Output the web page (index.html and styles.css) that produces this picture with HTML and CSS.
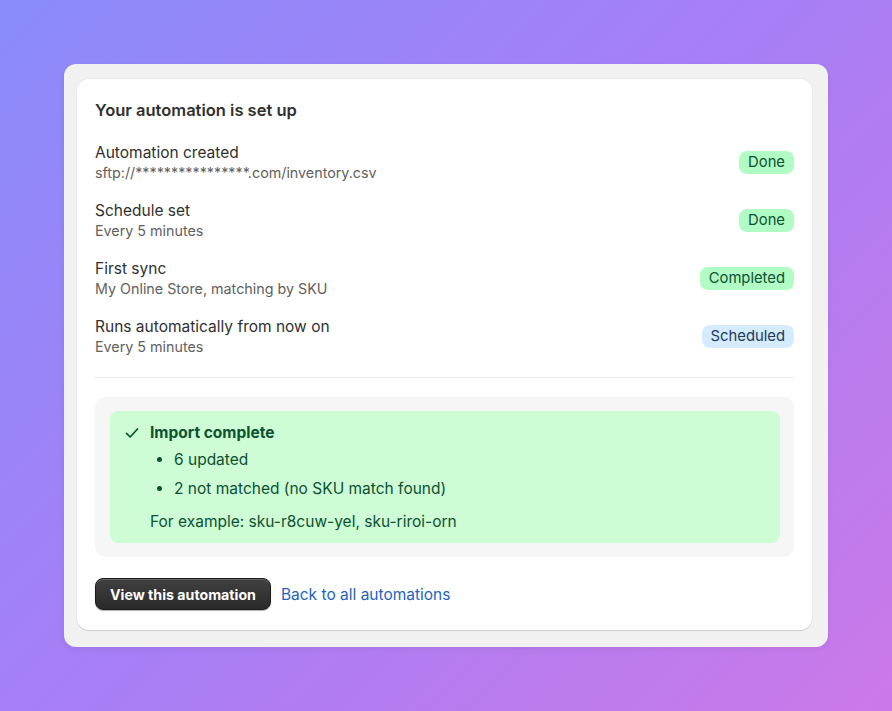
FILE: index.html
```html
<!DOCTYPE html>
<html lang="en">
<head>
    <title>Automation set up</title>
    <link rel="stylesheet" href="styles.css">
</head>
<body>
    <div class="frame">
        <div class="card">
            <h2 class="title">Your automation is set up</h2>

            <div class="steps">
                <div class="step">
                    <div class="step-text">
                        <div class="step-label">Automation created</div>
                        <div class="step-sub">sftp://****************.com/inventory.csv</div>
                    </div>
                    <span class="badge badge-success">Done</span>
                </div>
                <div class="step">
                    <div class="step-text">
                        <div class="step-label">Schedule set</div>
                        <div class="step-sub">Every 5 minutes</div>
                    </div>
                    <span class="badge badge-success">Done</span>
                </div>
                <div class="step">
                    <div class="step-text">
                        <div class="step-label">First sync</div>
                        <div class="step-sub">My Online Store, matching by SKU</div>
                    </div>
                    <span class="badge badge-success">Completed</span>
                </div>
                <div class="step">
                    <div class="step-text">
                        <div class="step-label">Runs automatically from now on</div>
                        <div class="step-sub">Every 5 minutes</div>
                    </div>
                    <span class="badge badge-info">Scheduled</span>
                </div>
            </div>

            <hr class="divider">

            <div class="result-box">
                <div class="notice">
                    <div class="notice-icon">
                        <svg width="14" height="14" viewBox="0 0 14 14" fill="none">
                            <path d="M1.5 7.4 L5.2 11 L12.5 3" stroke="#0c5132" stroke-width="1.7" stroke-linecap="round" stroke-linejoin="round"/>
                        </svg>
                    </div>
                    <div class="notice-body">
                        <div class="notice-title">Import complete</div>
                        <ul class="notice-list">
                            <li>6 updated</li>
                            <li>2 not matched (no SKU match found)</li>
                        </ul>
                        <p class="notice-example">For example: sku-r8cuw-yel, sku-riroi-orn</p>
                    </div>
                </div>
            </div>

            <div class="actions">
                <button type="button" class="button">View this automation</button>
                <a href="#" class="link">Back to all automations</a>
            </div>
        </div>
    </div>
</body>
</html>
```

FILE: styles.css
```css
html, body {
    height: 100%;
}

body {
    margin: 0;
    padding: 0;
    display: flex;
    align-items: center;
    justify-content: center;
    background: linear-gradient(135deg, #8a8bfb 0%, #a87ef5 50%, #cb79e8 100%);
    font-family: Inter, "Noto Sans", Arial, sans-serif;
    color: #303030;
}

.frame {
    width: 764px;
    box-sizing: border-box;
    padding: 15px 16px 17px 13px;
    background-color: #f1f1f1;
    border-radius: 12px;
    box-shadow: 0 2px 6px rgba(0, 0, 0, 0.06);
}

.card {
    padding: 21px 18px 20px 18px;
    background-color: #fff;
    border-radius: 12px;
    box-shadow: 0 1px 0 rgba(26, 26, 26, 0.12), 0 0 0 1px rgba(26, 26, 26, 0.03);
}

.title {
    margin: 0;
    font-size: 16.5px;
    line-height: 20px;
    font-weight: 620;
    color: #303030;
}

.steps {
    display: flex;
    flex-direction: column;
    gap: 17px;
    margin-top: 22px;
}

.step {
    display: flex;
    align-items: center;
    justify-content: space-between;
}

.step-label {
    font-size: 15.5px;
    line-height: 21px;
    color: #303030;
}

.step-sub {
    font-size: 14.3px;
    line-height: 20px;
    color: #616161;
}

.badge {
    display: inline-block;
    padding: 0 9px;
    height: 23px;
    line-height: 23px;
    border-radius: 8px;
    font-size: 14.8px;
}

.badge-success {
    background-color: #b1fcc5;
    color: #0c5132;
}

.badge-info {
    background-color: #d5ebff;
    color: #1d3a57;
}

.divider {
    margin: 20px 0 19px;
    border: none;
    border-top: 1px solid #ebebeb;
}

.result-box {
    padding: 14px 14px 14px 15px;
    background-color: #f6f6f6;
    border-radius: 10px;
}

.notice {
    display: flex;
    gap: 5px;
    padding: 12px 16px 11px 15px;
    background-color: #cdfcd5;
    border-radius: 8px;
    color: #0c5132;
    font-size: 15.5px;
    line-height: 20px;
}

.notice-icon {
    width: 20px;
    height: 20px;
    display: flex;
    align-items: center;
}

.notice-title {
    font-weight: 650;
}

.notice-list {
    margin: 7px 0 0;
    padding-left: 24px;
}

.notice-list li + li {
    margin-top: 9px;
}

.notice-example {
    margin: 13px 0 0;
}

.actions {
    display: flex;
    align-items: center;
    gap: 10px;
    margin-top: 21px;
}

.button {
    height: 32px;
    padding: 0 14px;
    background: linear-gradient(#404040, #2a2a2a);
    color: #fff;
    border: 1px solid #1a1a1a;
    border-radius: 8px;
    box-shadow: inset 0 1px 0 rgba(255, 255, 255, 0.2), 0 1px 1px rgba(0, 0, 0, 0.3);
    font-family: inherit;
    font-size: 14.2px;
    font-weight: 650;
    cursor: pointer;
}

.link {
    color: #2463bc;
    font-size: 15.5px;
    text-decoration: none;
}
```
